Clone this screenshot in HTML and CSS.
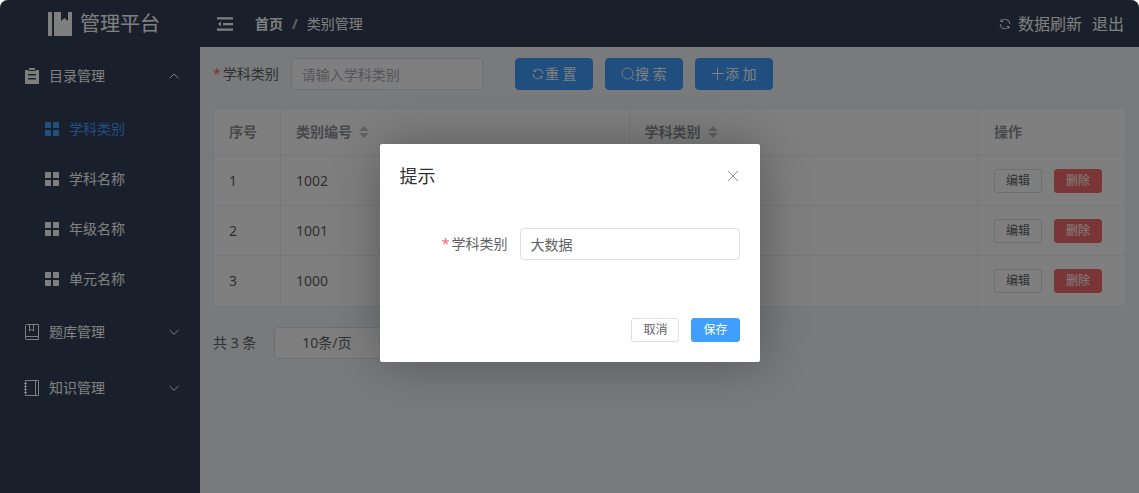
FILE: index.html
```html
<!DOCTYPE html>
<html lang="zh-CN">
<head>
<meta charset="utf-8">
<title>管理平台</title>
<link rel="stylesheet" href="styles.css">
</head>
<body>
<svg width="0" height="0" class="sprite" aria-hidden="true">
  <symbol id="i-grid" viewBox="0 0 14 14"><path fill="currentColor" d="M1 0h4.500a.5.5 0 0 1 .5.5V6H.5a.5.5 0 0 1-.5-.5V1a1 1 0 0 1 1-1zM8 0h5a1 1 0 0 1 1 1v4.500a.5.5 0 0 1-.5.5H8zM0 8h6v6H1a1 1 0 0 1-1-1zM8 8h5.500a.5.5 0 0 1 .5.5V13a1 1 0 0 1-1 1H8z"/></symbol>
  <symbol id="i-down" viewBox="0 0 12 12"><path fill="none" stroke="currentColor" d="M1.500 4 6 8.300 10.500 4"/></symbol>
  <symbol id="i-up" viewBox="0 0 12 12"><path fill="none" stroke="currentColor" d="M1.500 8.300 6 4l4.500 4.300"/></symbol>
  <symbol id="i-refresh" viewBox="0 0 1024 1024"><path fill="currentColor" d="M771.776 794.880A384 384 0 0 1 128 512h64a320 320 0 0 0 555.712 216.448H654.720a32 32 0 1 1 0-64h149.056a32 32 0 0 1 32 32v148.928a32 32 0 1 1-64 0v-50.560zM276.288 295.616h92.992a32 32 0 0 1 0 64H220.160a32 32 0 0 1-32-32V178.560a32 32 0 0 1 64 0v50.560A384 384 0 0 1 896.128 512h-64a320 320 0 0 0-555.776-216.384z"/></symbol>
  <symbol id="i-sort" viewBox="0 0 10 12"><path fill="currentColor" d="M5 0l5 5H0zM0 7h10l-5 5z"/></symbol>
</svg>
<div class="app">
  <aside class="sidebar">
    <div class="logo">
      <svg width="24" height="24" viewBox="0 0 24 24"><path fill="currentColor" d="M0 0h4v24H0zM6 0h7v9l3.500-3L20 9V0h4v24H6z"/></svg>
      <span>管理平台</span>
    </div>
    <nav>
      <a class="item" href="#">
        <svg class="icon" width="16" height="18" viewBox="0 0 16 18"><path fill="currentColor" fill-rule="evenodd" d="M5 1h6v2h4v14H1V3h4zM4 7v1.500h8V7zM4 11v1.500h8V11z"/><path stroke="#334157" d="M4.500 3.500h7"/></svg>
        <span>目录管理</span><svg class="arrow" width="12" height="12"><use href="#i-up"/></svg>
      </a>
      <a class="item sub active" href="#"><svg class="icon" width="14" height="14"><use href="#i-grid"/></svg><span>学科类别</span></a>
      <a class="item sub" href="#"><svg class="icon" width="14" height="14"><use href="#i-grid"/></svg><span>学科名称</span></a>
      <a class="item sub" href="#"><svg class="icon" width="14" height="14"><use href="#i-grid"/></svg><span>年级名称</span></a>
      <a class="item sub" href="#"><svg class="icon" width="14" height="14"><use href="#i-grid"/></svg><span>单元名称</span></a>
      <a class="item" href="#">
        <svg class="icon" width="16" height="16" viewBox="0 0 16 16" fill="none" stroke="currentColor"><path d="M2.500.5h12v15h-12a1 1 0 0 1-1-1v-13a1 1 0 0 1 1-1zM1.500 12.500h13M5.500.5v6.500l2-1.500 2 1.500V.5"/></svg>
        <span>题库管理</span><svg class="arrow" width="12" height="12"><use href="#i-down"/></svg>
      </a>
      <a class="item" href="#">
        <svg class="icon" width="16" height="16" viewBox="0 0 16 16" fill="none" stroke="currentColor"><path d="M1.500.5h13v15h-13zM11.500.5v15M0 3.500h3M0 6.500h3M0 9.500h3M0 12.500h3"/></svg>
        <span>知识管理</span><svg class="arrow" width="12" height="12"><use href="#i-down"/></svg>
      </a>
    </nav>
  </aside>
  <div class="content">
    <header class="topbar">
      <button class="plain" type="button" aria-label="折叠菜单"><svg width="16" height="14" viewBox="0 0 16 14"><path fill="currentColor" d="M0 .3h16v2.200H0zM6 6h10v2.200H6zM0 11.500h16v2.200H0zM4 4.500v5L1 7z"/></svg></button>
      <div class="crumbs"><a class="home" href="#">首页</a><span class="slash">/</span><span>类别管理</span></div>
      <div class="actions">
        <button class="plain refresh" type="button"><svg width="14" height="14"><use href="#i-refresh"/></svg>数据刷新</button>
        <button class="plain" type="button">退出</button>
      </div>
    </header>
    <main class="page">
      <form class="filters">
        <label class="label required" for="q">学科类别</label>
        <input class="field query" id="q" type="text" placeholder="请输入学科类别">
        <div class="buttons">
          <button class="btn primary" type="button"><svg width="14" height="14"><use href="#i-refresh"/></svg>重 置</button>
          <button class="btn primary" type="button"><svg width="14" height="14" viewBox="0 0 14 14" fill="none" stroke="currentColor"><circle cx="6.500" cy="6.500" r="5.500"/><path d="M10.500 10.500l2.500 2.500"/></svg>搜 索</button>
          <button class="btn primary" type="button"><svg width="14" height="14" viewBox="0 0 14 14" stroke="currentColor"><path d="M1 6.500h12M6.500 1v12"/></svg>添 加</button>
        </div>
      </form>
      <table class="table">
        <colgroup><col class="c-index"><col><col><col class="c-ops"></colgroup>
        <thead><tr><th>序号</th><th>类别编号<svg class="sort" width="10" height="12"><use href="#i-sort"/></svg></th><th>学科类别<svg class="sort" width="10" height="12"><use href="#i-sort"/></svg></th><th>操作</th></tr></thead>
        <tbody>
          <tr><td>1</td><td>1002</td><td></td><td><div class="ops"><button class="btn mini" type="button">编辑</button><button class="btn mini danger" type="button">删除</button></div></td></tr>
          <tr><td>2</td><td>1001</td><td></td><td><div class="ops"><button class="btn mini" type="button">编辑</button><button class="btn mini danger" type="button">删除</button></div></td></tr>
          <tr><td>3</td><td>1000</td><td></td><td><div class="ops"><button class="btn mini" type="button">编辑</button><button class="btn mini danger" type="button">删除</button></div></td></tr>
        </tbody>
      </table>
      <div class="pager">
        <span>共 3 条</span>
        <div class="size"><select class="field" aria-label="每页条数"><option>10条/页</option></select><svg class="caret" width="12" height="12"><use href="#i-down"/></svg></div>
      </div>
    </main>
  </div>
  <div class="overlay">
    <div class="dialog" role="dialog" aria-labelledby="dlg">
      <div class="dialog-head">
        <h2 id="dlg">提示</h2>
        <button class="plain close" type="button" aria-label="关闭"><svg width="14" height="14" viewBox="0 0 14 14"><path stroke="currentColor" d="M2 2l10 10M12 2L2 12"/></svg></button>
      </div>
      <div class="dialog-body">
        <label class="label required" for="name">学科类别</label>
        <input class="field" id="name" type="text" value="大数据">
      </div>
      <div class="dialog-foot">
        <button class="btn mini" type="button">取消</button>
        <button class="btn mini primary" type="button">保存</button>
      </div>
    </div>
  </div>
</div>
</body>
</html>
```

FILE: styles.css
```css
* { box-sizing: border-box; }
body {
  margin: 0;
  background: #fff;
  color: #606266;
  font: 14px/20px "Noto Sans", "Noto Sans CJK SC", sans-serif;
}
button, input, select { font: inherit; color: inherit; }
a { color: inherit; text-decoration: none; }
svg { display: block; flex: none; }
.sprite { position: absolute; }

.app {
  position: relative;
  display: flex;
  min-height: 100vh;
  border-radius: 8px 8px 0 0;
  overflow: hidden;
}

.sidebar { width: 200px; flex: none; background: #334157; color: #fff; }
.logo {
  display: flex;
  align-items: center;
  gap: 8px;
  height: 48px;
  padding-left: 48px;
  font-size: 20px;
}
.item { display: flex; align-items: center; height: 56px; padding: 0 20px; }
.item.sub { height: 50px; padding-left: 40px; }
.item.active { color: #409eff; }
.item .icon { margin: 0 5px; }
.item .icon[width="16"] { margin: 0 4px; }
.item span { margin-left: 5px; }
.arrow { margin-left: auto; }

.content { flex: 1; min-width: 0; background: #f2f5f9; }
.topbar {
  display: flex;
  align-items: center;
  height: 47px;
  padding: 0 15px 0 17px;
  background: #334157;
  color: #fff;
}
.plain {
  display: flex;
  align-items: center;
  padding: 0;
  border: 0;
  background: none;
  cursor: pointer;
}
.crumbs { display: flex; margin-left: 22px; }
.home { font-weight: bold; }
.slash { margin: 0 9px; font-weight: bold; color: #c0c4cc; }
.actions { display: flex; gap: 10px; margin-left: auto; font-size: 16px; }
.refresh { gap: 6px; }

.page { padding: 11px 13px; }
.filters { display: flex; align-items: center; }
.label { padding-right: 12px; text-align: right; }
.required::before { content: "*"; margin-right: 2px; color: #f56c6c; }
.field {
  width: 100%;
  height: 32px;
  padding: 0 10px;
  border: 1px solid #dcdfe6;
  border-radius: 4px;
  background: #fff;
  outline: none;
}
.field::placeholder { color: #a8abb2; }
.query { width: 192px; }
.buttons { display: flex; gap: 12px; margin-left: 32px; }
.btn {
  display: flex;
  align-items: center;
  justify-content: center;
  height: 32px;
  padding: 0 15px;
  border: 1px solid #dcdfe6;
  border-radius: 4px;
  background: #fff;
  white-space: nowrap;
  cursor: pointer;
}
.buttons .btn { min-width: 78px; }
.primary { border-color: #409eff; background: #409eff; color: #fff; }
.mini { height: 24px; padding: 0 11px; border-radius: 3px; font-size: 12px; }
.danger { border-color: #f56c6c; background: #f56c6c; color: #fff; }

.table {
  width: 100%;
  margin-top: 18px;
  border-collapse: collapse;
  table-layout: fixed;
  background: #fff;
}
.c-index { width: 67px; }
.c-ops { width: 148px; }
.table th, .table td {
  height: 50px;
  padding: 0 16px 0 15px;
  border: 1px solid #ebeef5;
  text-align: left;
}
.table th:last-child, .table td:last-child { padding-left: 16px; }
.table tr:last-child td { height: 51px; }
.table thead th { height: 47px; color: #909399; font-weight: bold; }
.sort { display: inline-block; margin-left: 7px; vertical-align: -1px; color: #c0c4cc; }
.ops { display: flex; gap: 12px; }

.pager { display: flex; align-items: center; gap: 18px; margin-top: 20px; }
.size { position: relative; width: 120px; }
.size .field { padding: 0 25px 0 10px; appearance: none; text-align-last: center; }
.caret { position: absolute; top: 10px; right: 5px; color: #c0c4cc; }

.overlay {
  position: absolute;
  inset: 0;
  display: flex;
  align-items: flex-start;
  justify-content: center;
  padding-top: 144px;
  background: rgba(0, 0, 0, 0.5);
}
.dialog {
  width: 380px;
  border-radius: 2px;
  background: #fff;
  box-shadow: 1px 1px 50px rgba(0, 0, 0, 0.3);
}
.dialog-head {
  display: flex;
  align-items: center;
  justify-content: space-between;
  padding: 20px 20px 10px;
}
.dialog-head h2 {
  margin: 0;
  color: #303133;
  font-size: 18px;
  font-weight: normal;
  line-height: 24px;
}
.close { color: #909399; }
.dialog-body { display: flex; align-items: center; padding: 30px 20px 48px; }
.dialog-body .label { flex: 0 0 120px; }
.dialog-foot {
  display: flex;
  justify-content: flex-end;
  gap: 12px;
  padding: 10px 20px 20px;
}
```
